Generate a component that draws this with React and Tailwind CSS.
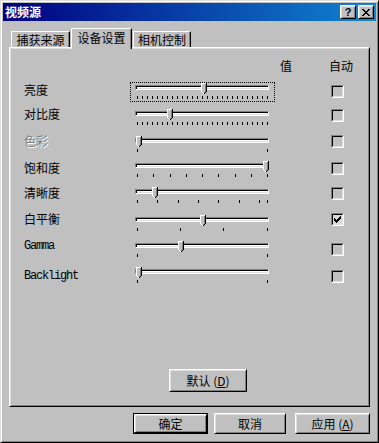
import React from "react";

const FONT = "font-['Noto_Sans_CJK_SC','Noto_Sans_CJK_JP',sans-serif]";

const fine = Array.from({ length: 26 }, (_, k) => 2 + 5 * k).concat(132);
const ends = [2, 132];

const rows = [
  { label: "亮度", h: "h-[26px]", lt: "mt-[7px]", ct: "mt-[8px]", thumb: 66, ticks: fine, focus: true },
  { label: "对比度", h: "h-[27px]", lt: "mt-[5px]", ct: "mt-[6px]", thumb: 32, ticks: fine },
  { label: "色彩", h: "h-[25px]", lt: "mt-[5px]", ct: "mt-[5px]", thumb: 1, ticks: ends, off: true },
  {
    label: "饱和度",
    h: "h-[26px]",
    lt: "mt-[7px]",
    ct: "mt-[7px]",
    thumb: 128,
    ticks: Array.from({ length: 9 }, (_, k) => Math.round(2 + 16.25 * k)),
  },
  {
    label: "清晰度",
    h: "h-[28px]",
    lt: "mt-[6px]",
    ct: "mt-[6px]",
    thumb: 17,
    ticks: Array.from({ length: 7 }, (_, k) => Math.round(2 + 20.3 * k)).concat(132),
  },
  { label: "白平衡", h: "h-[26px]", lt: "mt-[4px]", ct: "mt-[4px]", thumb: 65, ticks: [2, 45, 88, 132], on: true },
  { label: "Gamma", h: "h-[26px]", lt: "mt-[5px]", ct: "mt-[8px]", thumb: 43, ticks: ends, mono: true },
  { label: "Backlight", h: "h-[26px]", lt: "mt-[9px]", ct: "mt-[9px] ml-[2px]", thumb: 1, ticks: ends, mono: true },
];

function Thumb() {
  return (
    <svg width="6" height="11" viewBox="0 0 6 11" shapeRendering="crispEdges">
      <rect x="1" y="1" width="3" height="8" fill="#c0c0c0" />
      <rect x="0" y="0" width="5" height="1" fill="#fff" />
      <rect x="0" y="0" width="1" height="9" fill="#fff" />
      <rect x="4" y="1" width="1" height="8" fill="#808080" />
      <rect x="5" y="0" width="1" height="9" fill="#000" />
      <rect x="1" y="9" width="1" height="1" fill="#fff" />
      <rect x="2" y="9" width="1" height="1" fill="#c0c0c0" />
      <rect x="3" y="9" width="1" height="1" fill="#808080" />
      <rect x="4" y="9" width="1" height="1" fill="#000" />
      <rect x="2" y="10" width="1" height="1" fill="#fff" />
      <rect x="3" y="10" width="1" height="1" fill="#000" />
    </svg>
  );
}

function Slider({ thumb, ticks, focus }) {
  return (
    <div className="relative w-[134px] h-[16px]">
      {focus && (
        <div className="absolute left-[-5px] top-[-3px] w-[145px] h-[20px] border border-dotted border-black" />
      )}
      <div className="w-[134px] h-[5px] border border-t-[#808080] border-l-[#808080] border-b-white border-r-white bg-white shadow-[inset_1px_1px_#000,inset_-1px_-1px_#dfdfdf]" />
      {ticks.map((t) => (
        <div key={t} className="absolute top-[11px] w-[1px] h-[3px] bg-black" style={{ left: t }} />
      ))}
      <div className="absolute top-[-2px] leading-none" style={{ left: thumb }}>
        <Thumb />
      </div>
    </div>
  );
}

function Check({ on }) {
  return (
    <div className="w-[13px] h-[13px] border border-t-[#808080] border-l-[#808080] border-b-white border-r-white">
      <div
        className={
          on
            ? "w-full h-full border border-t-black border-l-black border-b-[#dfdfdf] border-r-[#dfdfdf] bg-[#d6ddd6] pl-[1px] pt-[1px]"
            : "w-full h-full border border-t-black border-l-black border-b-[#dfdfdf] border-r-[#dfdfdf] bg-[#c0c0c0]"
        }
      >
        {on && (
          <svg width="7" height="7" viewBox="0 0 7 7" shapeRendering="crispEdges" className="block">
            <rect x="6" y="0" width="1" height="1" />
            <rect x="5" y="1" width="2" height="1" />
            <rect x="0" y="2" width="1" height="1" />
            <rect x="4" y="2" width="3" height="1" />
            <rect x="0" y="3" width="2" height="1" />
            <rect x="3" y="3" width="3" height="1" />
            <rect x="0" y="4" width="5" height="1" />
            <rect x="1" y="5" width="3" height="1" />
            <rect x="2" y="6" width="1" height="1" />
          </svg>
        )}
      </div>
    </div>
  );
}

function Btn({ children, size }) {
  return (
    <div className={`${size} border border-t-white border-l-white border-b-black border-r-black`}>
      <div className="w-full h-full flex items-center justify-center shadow-[inset_1px_1px_#dfdfdf,inset_-1px_-1px_#808080] text-[12px] leading-[12px]">
        {children}
      </div>
    </div>
  );
}

function TitleBtn({ children }) {
  return (
    <div className="w-[16px] h-[14px] bg-[#c0c0c0] border border-t-white border-l-white border-b-black border-r-black">
      <div className="w-full h-full flex items-center justify-center shadow-[inset_1px_1px_#dfdfdf,inset_-1px_-1px_#808080]">
        {children}
      </div>
    </div>
  );
}

function Tab({ children }) {
  return (
    <div className="h-[16px] bg-[#c0c0c0] border-l border-t border-r border-l-white border-t-white border-r-black shadow-[inset_-1px_0_#808080] text-center text-[12px] leading-[12px] pt-[2px]">
      {children}
    </div>
  );
}

export default function App() {
  return (
    <div
      className={`w-[379px] h-[443px] bg-[#c0c0c0] border border-t-[#dfdfdf] border-l-[#dfdfdf] border-b-black border-r-black shadow-[inset_1px_1px_#fff,inset_-1px_-1px_#808080] p-[2px] flex flex-col text-black ${FONT}`}
    >
      {/* title bar */}
      <div className="h-[18px] flex items-center bg-[linear-gradient(to_right,#000080,#1084d0)] pl-[2px] pr-[2px]">
        <span className="flex-1 text-white font-bold text-[12px] leading-[12px]">视频源</span>
        <TitleBtn>
          <span className="font-['Liberation_Sans',sans-serif] font-bold text-[11px] leading-[11px] mt-[1px]">?</span>
        </TitleBtn>
        <div className="ml-[2px]">
          <TitleBtn>
            <svg width="8" height="7" viewBox="0 0 8 7" shapeRendering="crispEdges" className="block">
              <path d="M0 0h2v1h-2zM6 0h2v1h-2zM1 1h2v1h-2zM5 1h2v1h-2zM2 2h4v1h-4zM3 3h2v1h-2zM2 4h4v1h-4zM1 5h2v1h-2zM5 5h2v1h-2zM0 6h2v1h-2zM6 6h2v1h-2z" />
            </svg>
          </TitleBtn>
        </div>
      </div>

      {/* tabs */}
      <div className="mt-[7px] h-[19px] flex items-end pl-[8px]">
        <div className="w-[59px]">
          <Tab>捕获来源</Tab>
        </div>
        <div className="ml-[1px] relative z-10 -mb-[2px] h-[21px] w-[61px] bg-[#c0c0c0] border-l border-t border-r border-l-white border-t-white border-r-black shadow-[inset_-1px_0_#808080] text-center text-[12px] leading-[12px] pt-[3px]">
          设备设置
        </div>
        <div className="ml-[1px] w-[58px]">
          <Tab>相机控制</Tab>
        </div>
      </div>

      {/* panel */}
      <div className="mx-[6px] h-[360px] flex flex-col border border-t-white border-l-white border-b-black border-r-black shadow-[inset_1px_1px_#dfdfdf,inset_-1px_-1px_#808080]">
        <div className="h-[29px] pt-[12px] pl-[270px] flex text-[12px] leading-[12px]">
          <span>值</span>
          <span className="ml-[37px]">自动</span>
        </div>

        {rows.map((r) => (
          <div key={r.label} className={`flex items-start pl-[14px] ${r.h}`}>
            <div
              className={
                r.mono
                  ? `w-[111px] ${r.lt} font-['Liberation_Mono',monospace] text-[12px] leading-[12px] tracking-[-1.2px]`
                  : r.off
                  ? `w-[111px] ${r.lt} text-[12px] leading-[12px] text-[#808080] [text-shadow:1px_1px_#fff]`
                  : `w-[111px] ${r.lt} text-[12px] leading-[12px]`
              }
            >
              {r.label}
            </div>
            <div className="mt-[8px]">
              <Slider thumb={r.thumb} ticks={r.ticks} focus={r.focus} />
            </div>
            <div className={`ml-[62px] ${r.ct}`}>
              <Check on={r.on} />
            </div>
          </div>
        ))}

        <div className="mt-[82px] ml-[159px]">
          <Btn size="w-[78px] h-[23px]">
            默认 (<span className="underline">D</span>)
          </Btn>
        </div>
      </div>

      {/* dialog buttons */}
      <div className="mt-[6px] flex justify-end pr-[6px]">
        <div className="border border-black">
          <Btn size="w-[73px] h-[19px]">确定</Btn>
        </div>
        <div className="ml-[6px]">
          <Btn size="w-[72px] h-[21px]">取消</Btn>
        </div>
        <div className="ml-[9px]">
          <Btn size="w-[75px] h-[21px]">
            应用 (<span className="underline">A</span>)
          </Btn>
        </div>
      </div>
    </div>
  );
}
